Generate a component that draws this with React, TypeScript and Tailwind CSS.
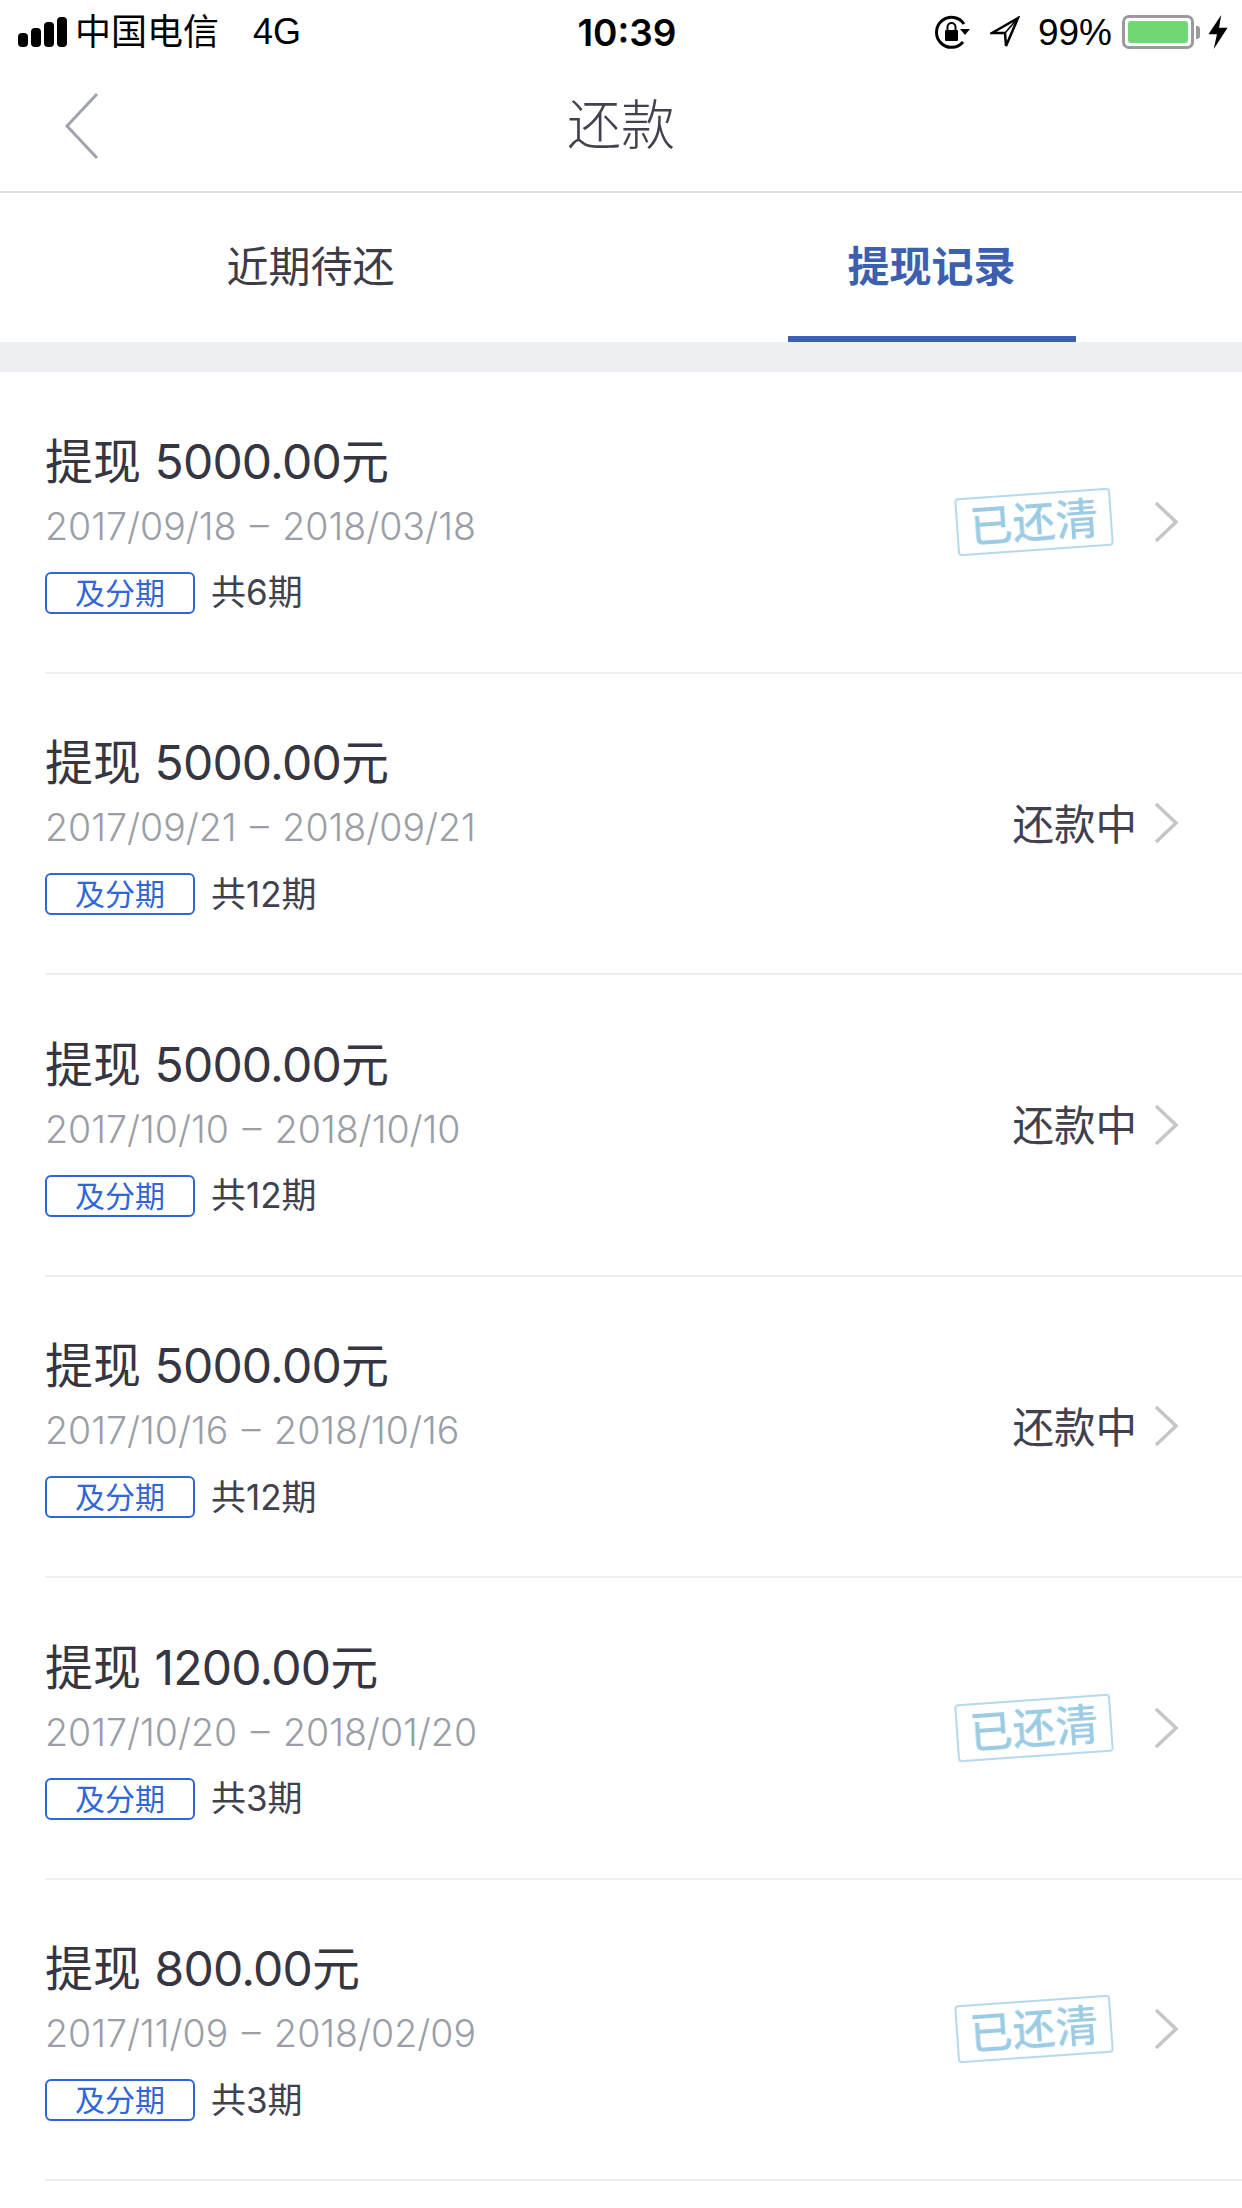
const font = "font-['Inter','Noto_Sans_CJK_SC',sans-serif]";

type Row = { amount: string; range: string; total: string; paid: boolean };

const rows: Row[] = [
  { amount: '5000.00', range: '2017/09/18 – 2018/03/18', total: '共6期', paid: true },
  { amount: '5000.00', range: '2017/09/21 – 2018/09/21', total: '共12期', paid: false },
  { amount: '5000.00', range: '2017/10/10 – 2018/10/10', total: '共12期', paid: false },
  { amount: '5000.00', range: '2017/10/16 – 2018/10/16', total: '共12期', paid: false },
  { amount: '1200.00', range: '2017/10/20 – 2018/01/20', total: '共3期', paid: true },
  { amount: '800.00', range: '2017/11/09 – 2018/02/09', total: '共3期', paid: true },
];

const Chevron = () => (
  <svg width="26" height="42" viewBox="0 0 26 42" fill="none" className="shrink-0">
    <path d="M3 2 L23 21 L3 40" stroke="#c6c6c8" strokeWidth="3.5" />
  </svg>
);

const Stamp = () => (
  <div className="w-[156px] h-[58px] -rotate-[4deg] border-2 border-[#b4d9ec] rounded-[4px] flex items-center justify-center text-[43px] leading-none text-[#9ccbe4] font-medium blur-[0.5px]">
    已还清
  </div>
);

const StatusBar = () => (
  <div className="h-[64px] flex items-center justify-between pl-[18px] pr-[14px] text-black">
    <div className="flex items-center w-[404px]">
      <div className="flex items-end gap-[3px] mr-[8px]">
        <span className="w-[10px] h-[14px] bg-black rounded-[4px]" />
        <span className="w-[10px] h-[19px] bg-black rounded-[4px]" />
        <span className="w-[10px] h-[25px] bg-black rounded-[4px]" />
        <span className="w-[10px] h-[30px] bg-black rounded-[4px]" />
      </div>
      <span className="text-[36px] leading-none">中国电信</span>
      <span className="text-[36px] leading-none ml-[34px] font-['Liberation_Sans',sans-serif]">4G</span>
    </div>
    <span className="text-[37px] leading-none font-semibold">10:39</span>
    <div className="flex items-center w-[396px] justify-end">
      <svg width="36" height="34" viewBox="0 0 36 34" fill="none" className="mr-[19px]">
        <path d="M29 9 A15 15 0 1 0 28 27" stroke="#000" strokeWidth="3" />
        <path d="M25 14 L35 14 L30 20 Z" fill="#000" />
        <rect x="10" y="15" width="13" height="11" rx="1" fill="#000" />
        <path d="M12.5 15 V12 A4 4 0 0 1 20.5 12 V15" stroke="#000" strokeWidth="2" />
      </svg>
      <svg width="30" height="32" viewBox="0 0 30 32" fill="none" className="mr-[18px]">
        <path d="M28 2 L2 17 L15 17 L16 30 Z" stroke="#000" strokeWidth="2.5" />
        <path d="M28 2 L15 17" stroke="#000" strokeWidth="1.5" />
      </svg>
      <span className="text-[37px] leading-none font-['Liberation_Sans',sans-serif]">99%</span>
      <div className="ml-[10px] w-[72px] h-[34px] border-[3px] border-[#9a9a9a] rounded-[7px] p-[3px]">
        <div className="w-full h-full bg-[#72d873] rounded-[3px]" />
      </div>
      <span className="w-[4px] h-[13px] bg-[#9a9a9a] rounded-r-[3px] ml-[2px]" />
      <svg width="20" height="34" viewBox="0 0 18 32" className="ml-[8px]">
        <path d="M12 0 L0 18 L8 18 L5 32 L18 12 L10 12 Z" fill="#000" />
      </svg>
    </div>
  </div>
);

export default function App() {
  return (
    <div className={`w-[1242px] h-[2208px] overflow-hidden bg-white ${font}`}>
      <StatusBar />

      {/* 헤더 */}
      <div className="relative h-[129px] flex items-center justify-center border-b-2 border-[#e0e0e2] pb-[3px]">
        <svg width="34" height="66" viewBox="0 0 34 66" fill="none" className="absolute left-[65px] top-[29px]">
          <path d="M32 1 L2 33 L32 65" stroke="#a0a3ad" strokeWidth="3" />
        </svg>
        <span className="text-[54px] leading-none text-[#41414e] font-light">还款</span>
      </div>

      {/* 탭 */}
      <div className="h-[149px] flex">
        <div className="w-1/2 flex items-center justify-center text-[42px] text-[#3c3c48] pb-[2px]">近期待还</div>
        <div className="w-1/2 flex justify-center">
          <div className="w-[288px] h-full border-b-[6px] border-[#3d5fb0] flex items-center justify-center text-[42px] font-bold text-[#3d5fb0] pt-[3px]">
            提现记录
          </div>
        </div>
      </div>
      <div className="h-[30px] bg-[#eeeff3]" />

      {/* 목록 */}
      {rows.map((row, i) => (
        <div key={i} className="h-[301.5px] ml-[45px] border-b-2 border-[#eeeef2] flex items-center justify-between pr-[63px]">
          <div className="flex flex-col pt-[4px]">
            <div className="text-[48px] leading-[56px] text-[#363642]">
              提现 <span className="tracking-[-0.8px]">{row.amount}</span>元
            </div>
            <div className="text-[37.5px] leading-[44px] mt-[15px] text-[#9b9ea6] font-light [word-spacing:3px]">{row.range}</div>
            <div className="flex items-center mt-[23px]">
              <span className="w-[150px] h-[42px] border-2 border-[#2f66d8] rounded-[6px] flex items-center justify-center text-[30px] leading-none text-[#2f66d8]">
                及分期
              </span>
              <span className="ml-[16px] text-[35px] leading-none text-[#41414e]">{row.total}</span>
            </div>
          </div>
          <div className="flex items-center">
            {row.paid ? <Stamp /> : <span className="text-[41.5px] leading-none text-[#41414e] pt-[4px]">还款中</span>}
            <span className={row.paid ? 'ml-[41px]' : 'ml-[16px]'}>
              <Chevron />
            </span>
          </div>
        </div>
      ))}
    </div>
  );
}
